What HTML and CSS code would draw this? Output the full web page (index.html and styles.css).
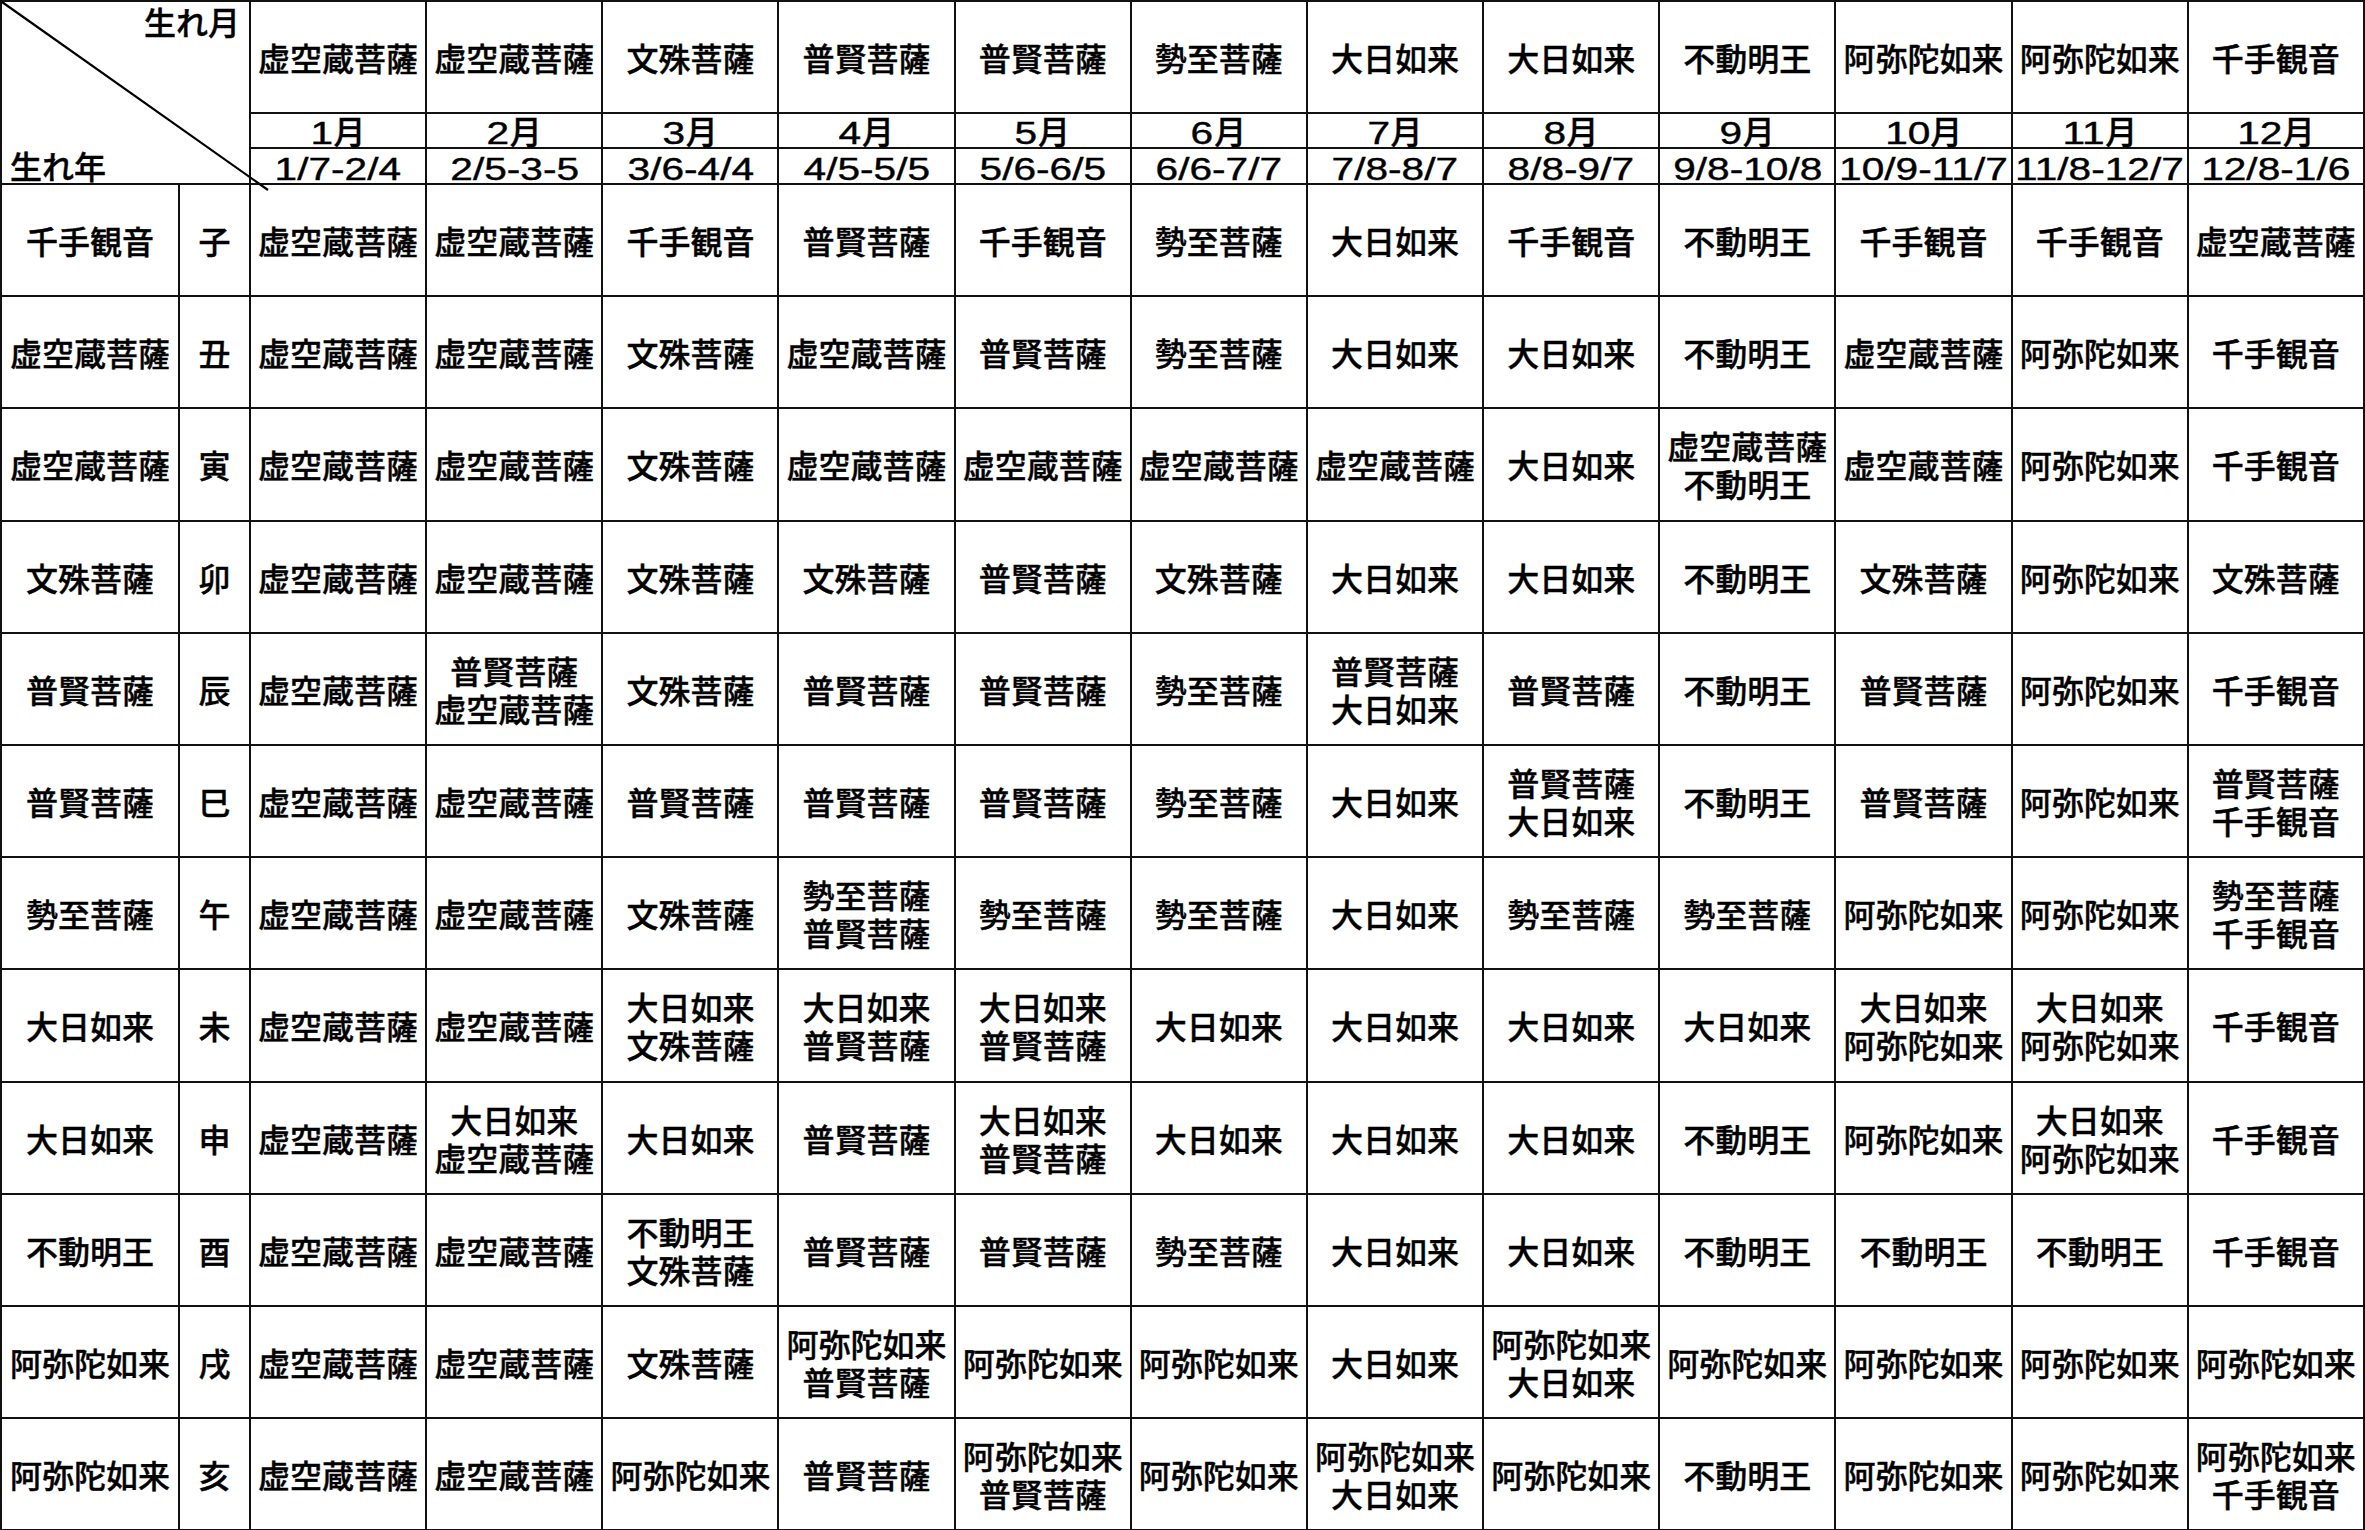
FILE: index.html
```html
<!DOCTYPE html>
<html lang="ja">
<head>
<meta charset="utf-8">
<title>守り本尊表</title>
<link rel="stylesheet" href="styles.css">
</head>
<body>
<div class="wrap">
<table class="chart">
<colgroup><col class="c-name"><col class="c-eto"><col span="12"></colgroup>
<tr class="h1">
<td class="corner" colspan="2" rowspan="3"><div class="corner-box"><span class="cm">生れ月</span><span class="cy">生れ年</span></div></td>
<td>虚空蔵菩薩</td><td>虚空蔵菩薩</td><td>文殊菩薩</td><td>普賢菩薩</td><td>普賢菩薩</td><td>勢至菩薩</td><td>大日如来</td><td>大日如来</td><td>不動明王</td><td>阿弥陀如来</td><td>阿弥陀如来</td><td>千手観音</td>
</tr>
<tr class="h2">
<td><span class="mn">1</span>月</td><td><span class="mn">2</span>月</td><td><span class="mn">3</span>月</td><td><span class="mn">4</span>月</td><td><span class="mn">5</span>月</td><td><span class="mn">6</span>月</td><td><span class="mn">7</span>月</td><td><span class="mn">8</span>月</td><td><span class="mn">9</span>月</td><td><span class="mn mn2">10</span>月</td><td><span class="mn mn2">11</span>月</td><td><span class="mn mn2">12</span>月</td>
</tr>
<tr class="h3">
<td><span class="dt">1/7-2/4</span></td><td><span class="dt">2/5-3-5</span></td><td><span class="dt">3/6-4/4</span></td><td><span class="dt">4/5-5/5</span></td><td><span class="dt">5/6-6/5</span></td><td><span class="dt">6/6-7/7</span></td><td><span class="dt">7/8-8/7</span></td><td><span class="dt">8/8-9/7</span></td><td><span class="dt">9/8-10/8</span></td><td><span class="dt">10/9-11/7</span></td><td><span class="dt">11/8-12/7</span></td><td><span class="dt">12/8-1/6</span></td>
</tr>
<tr class="row">
<td>千手観音</td><td>子</td>
<td>虚空蔵菩薩</td><td>虚空蔵菩薩</td><td>千手観音</td><td>普賢菩薩</td><td>千手観音</td><td>勢至菩薩</td><td>大日如来</td><td>千手観音</td><td>不動明王</td><td>千手観音</td><td>千手観音</td><td>虚空蔵菩薩</td>
</tr>
<tr class="row">
<td>虚空蔵菩薩</td><td>丑</td>
<td>虚空蔵菩薩</td><td>虚空蔵菩薩</td><td>文殊菩薩</td><td>虚空蔵菩薩</td><td>普賢菩薩</td><td>勢至菩薩</td><td>大日如来</td><td>大日如来</td><td>不動明王</td><td>虚空蔵菩薩</td><td>阿弥陀如来</td><td>千手観音</td>
</tr>
<tr class="row">
<td>虚空蔵菩薩</td><td>寅</td>
<td>虚空蔵菩薩</td><td>虚空蔵菩薩</td><td>文殊菩薩</td><td>虚空蔵菩薩</td><td>虚空蔵菩薩</td><td>虚空蔵菩薩</td><td>虚空蔵菩薩</td><td>大日如来</td><td>虚空蔵菩薩<br>不動明王</td><td>虚空蔵菩薩</td><td>阿弥陀如来</td><td>千手観音</td>
</tr>
<tr class="row">
<td>文殊菩薩</td><td>卯</td>
<td>虚空蔵菩薩</td><td>虚空蔵菩薩</td><td>文殊菩薩</td><td>文殊菩薩</td><td>普賢菩薩</td><td>文殊菩薩</td><td>大日如来</td><td>大日如来</td><td>不動明王</td><td>文殊菩薩</td><td>阿弥陀如来</td><td>文殊菩薩</td>
</tr>
<tr class="row">
<td>普賢菩薩</td><td>辰</td>
<td>虚空蔵菩薩</td><td>普賢菩薩<br>虚空蔵菩薩</td><td>文殊菩薩</td><td>普賢菩薩</td><td>普賢菩薩</td><td>勢至菩薩</td><td>普賢菩薩<br>大日如来</td><td>普賢菩薩</td><td>不動明王</td><td>普賢菩薩</td><td>阿弥陀如来</td><td>千手観音</td>
</tr>
<tr class="row">
<td>普賢菩薩</td><td>巳</td>
<td>虚空蔵菩薩</td><td>虚空蔵菩薩</td><td>普賢菩薩</td><td>普賢菩薩</td><td>普賢菩薩</td><td>勢至菩薩</td><td>大日如来</td><td>普賢菩薩<br>大日如来</td><td>不動明王</td><td>普賢菩薩</td><td>阿弥陀如来</td><td>普賢菩薩<br>千手観音</td>
</tr>
<tr class="row">
<td>勢至菩薩</td><td>午</td>
<td>虚空蔵菩薩</td><td>虚空蔵菩薩</td><td>文殊菩薩</td><td>勢至菩薩<br>普賢菩薩</td><td>勢至菩薩</td><td>勢至菩薩</td><td>大日如来</td><td>勢至菩薩</td><td>勢至菩薩</td><td>阿弥陀如来</td><td>阿弥陀如来</td><td>勢至菩薩<br>千手観音</td>
</tr>
<tr class="row">
<td>大日如来</td><td>未</td>
<td>虚空蔵菩薩</td><td>虚空蔵菩薩</td><td>大日如来<br>文殊菩薩</td><td>大日如来<br>普賢菩薩</td><td>大日如来<br>普賢菩薩</td><td>大日如来</td><td>大日如来</td><td>大日如来</td><td>大日如来</td><td>大日如来<br>阿弥陀如来</td><td>大日如来<br>阿弥陀如来</td><td>千手観音</td>
</tr>
<tr class="row">
<td>大日如来</td><td>申</td>
<td>虚空蔵菩薩</td><td>大日如来<br>虚空蔵菩薩</td><td>大日如来</td><td>普賢菩薩</td><td>大日如来<br>普賢菩薩</td><td>大日如来</td><td>大日如来</td><td>大日如来</td><td>不動明王</td><td>阿弥陀如来</td><td>大日如来<br>阿弥陀如来</td><td>千手観音</td>
</tr>
<tr class="row">
<td>不動明王</td><td>酉</td>
<td>虚空蔵菩薩</td><td>虚空蔵菩薩</td><td>不動明王<br>文殊菩薩</td><td>普賢菩薩</td><td>普賢菩薩</td><td>勢至菩薩</td><td>大日如来</td><td>大日如来</td><td>不動明王</td><td>不動明王</td><td>不動明王</td><td>千手観音</td>
</tr>
<tr class="row">
<td>阿弥陀如来</td><td>戌</td>
<td>虚空蔵菩薩</td><td>虚空蔵菩薩</td><td>文殊菩薩</td><td>阿弥陀如来<br>普賢菩薩</td><td>阿弥陀如来</td><td>阿弥陀如来</td><td>大日如来</td><td>阿弥陀如来<br>大日如来</td><td>阿弥陀如来</td><td>阿弥陀如来</td><td>阿弥陀如来</td><td>阿弥陀如来</td>
</tr>
<tr class="row">
<td>阿弥陀如来</td><td>亥</td>
<td>虚空蔵菩薩</td><td>虚空蔵菩薩</td><td>阿弥陀如来</td><td>普賢菩薩</td><td>阿弥陀如来<br>普賢菩薩</td><td>阿弥陀如来</td><td>阿弥陀如来<br>大日如来</td><td>阿弥陀如来</td><td>不動明王</td><td>阿弥陀如来</td><td>阿弥陀如来</td><td>阿弥陀如来<br>千手観音</td>
</tr>
</table>
<svg class="diag" width="272" height="194" viewBox="0 0 272 194"><line x1="2" y1="2" x2="268" y2="190" stroke="#000" stroke-width="2.2"/></svg>
</div>
</body>
</html>
```

FILE: styles.css
```css
html, body {
  margin: 0;
  padding: 0;
  background: #fff;
}
.wrap {
  position: relative;
  width: 2365px;
}
.chart {
  border-collapse: collapse;
  table-layout: fixed;
  width: 2365px;
  font-family: "Noto Sans CJK JP", "Noto Sans CJK SC", sans-serif;
  font-size: 32px;
  font-weight: 500;
  color: #000;
  -webkit-text-stroke: 0.4px #000;
}
.c-name { width: 178px; }
.c-eto { width: 71px; }
.chart td {
  border: 2px solid #111;
  padding: 0;
  text-align: center;
  vertical-align: middle;
  white-space: nowrap;
  line-height: 38px;
}
.h1 { height: 112px; }
.h2 { height: 35px; }
.h3 { height: 36px; }
.row { height: 112.2px; }
.chart .h2 td {
  height: 33px;
  line-height: 33px;
  vertical-align: bottom;
}
.chart .h3 td {
  height: 34px;
  line-height: 34px;
  vertical-align: bottom;
}
.mn {
  display: inline-block;
  font-family: "Liberation Sans", Arial, sans-serif;
  font-weight: 400;
  font-size: 32px;
  line-height: 26px;
  transform: scaleX(1.27);
  margin: 0 3px 0 2px;
}
.mn2 { margin: 0 5px 0 5px; }
.dt {
  display: inline-block;
  font-family: "Liberation Sans", Arial, sans-serif;
  font-weight: 400;
  font-size: 32px;
  line-height: 26px;
  transform: scaleX(1.27);
}
.chart td.corner {
  vertical-align: top;
}
.corner-box {
  height: 180px;
  display: flex;
  flex-direction: column;
  justify-content: space-between;
  line-height: 34px;
}
.cm {
  align-self: flex-end;
  padding: 2px 9px 0 0;
}
.cy {
  align-self: flex-start;
  padding: 0 0 0 8px;
}
.diag {
  position: absolute;
  left: 0;
  top: 0;
  pointer-events: none;
}
```
